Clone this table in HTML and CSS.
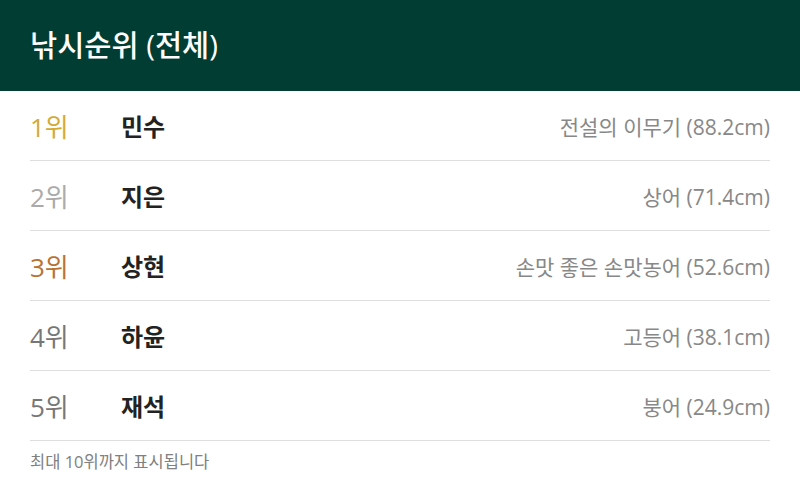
FILE: index.html
```html
<!DOCTYPE html>
<html lang="ko">
<head>
<meta charset="utf-8">
<link rel="stylesheet" href="styles.css">
</head>
<body>
<header class="header"><h1 class="title">낚시순위 (전체)</h1></header>
<main class="list">
  <div class="row"><span class="rank gold">1위</span><span class="name">민수</span><span class="catch">전설의 이무기 (88.2cm)</span></div>
  <div class="row"><span class="rank silver">2위</span><span class="name">지은</span><span class="catch">상어 (71.4cm)</span></div>
  <div class="row"><span class="rank bronze">3위</span><span class="name">상현</span><span class="catch">손맛 좋은 손맛농어 (52.6cm)</span></div>
  <div class="row"><span class="rank">4위</span><span class="name">하윤</span><span class="catch">고등어 (38.1cm)</span></div>
  <div class="row"><span class="rank">5위</span><span class="name">재석</span><span class="catch">붕어 (24.9cm)</span></div>
  <p class="note">최대 10위까지 표시됩니다</p>
</main>
</body>
</html>
```
FILE: styles.css
```css
html, body { margin: 0; padding: 0; }
body {
  width: 800px; height: 480px; overflow: hidden; background: #fff;
  font-family: "Open Sans", "Noto Sans CJK KR", sans-serif;
}
.header {
  height: 91px; background: #013d33; display: flex; align-items: center;
  padding: 0 30px; box-sizing: border-box;
}
.title { margin: 0 0 2px; color: #fff; font-size: 29.5px; font-weight: 500; line-height: 1; }
.list { padding: 0 30px; }
.row {
  height: 69px; border-bottom: 1px solid #dedede; display: flex; align-items: center;
}
.rank { width: 91px; font-size: 26px; color: #777; }
.gold { color: #d4aa35; }
.silver { color: #aaaaaa; }
.bronze { color: #b87333; }
.name { font-size: 24px; font-weight: 700; color: #222; }
.catch { margin-left: auto; font-size: 21px; color: #888; }
.note { margin: 8px 0 0; font-size: 16.5px; color: #808080; }
```
